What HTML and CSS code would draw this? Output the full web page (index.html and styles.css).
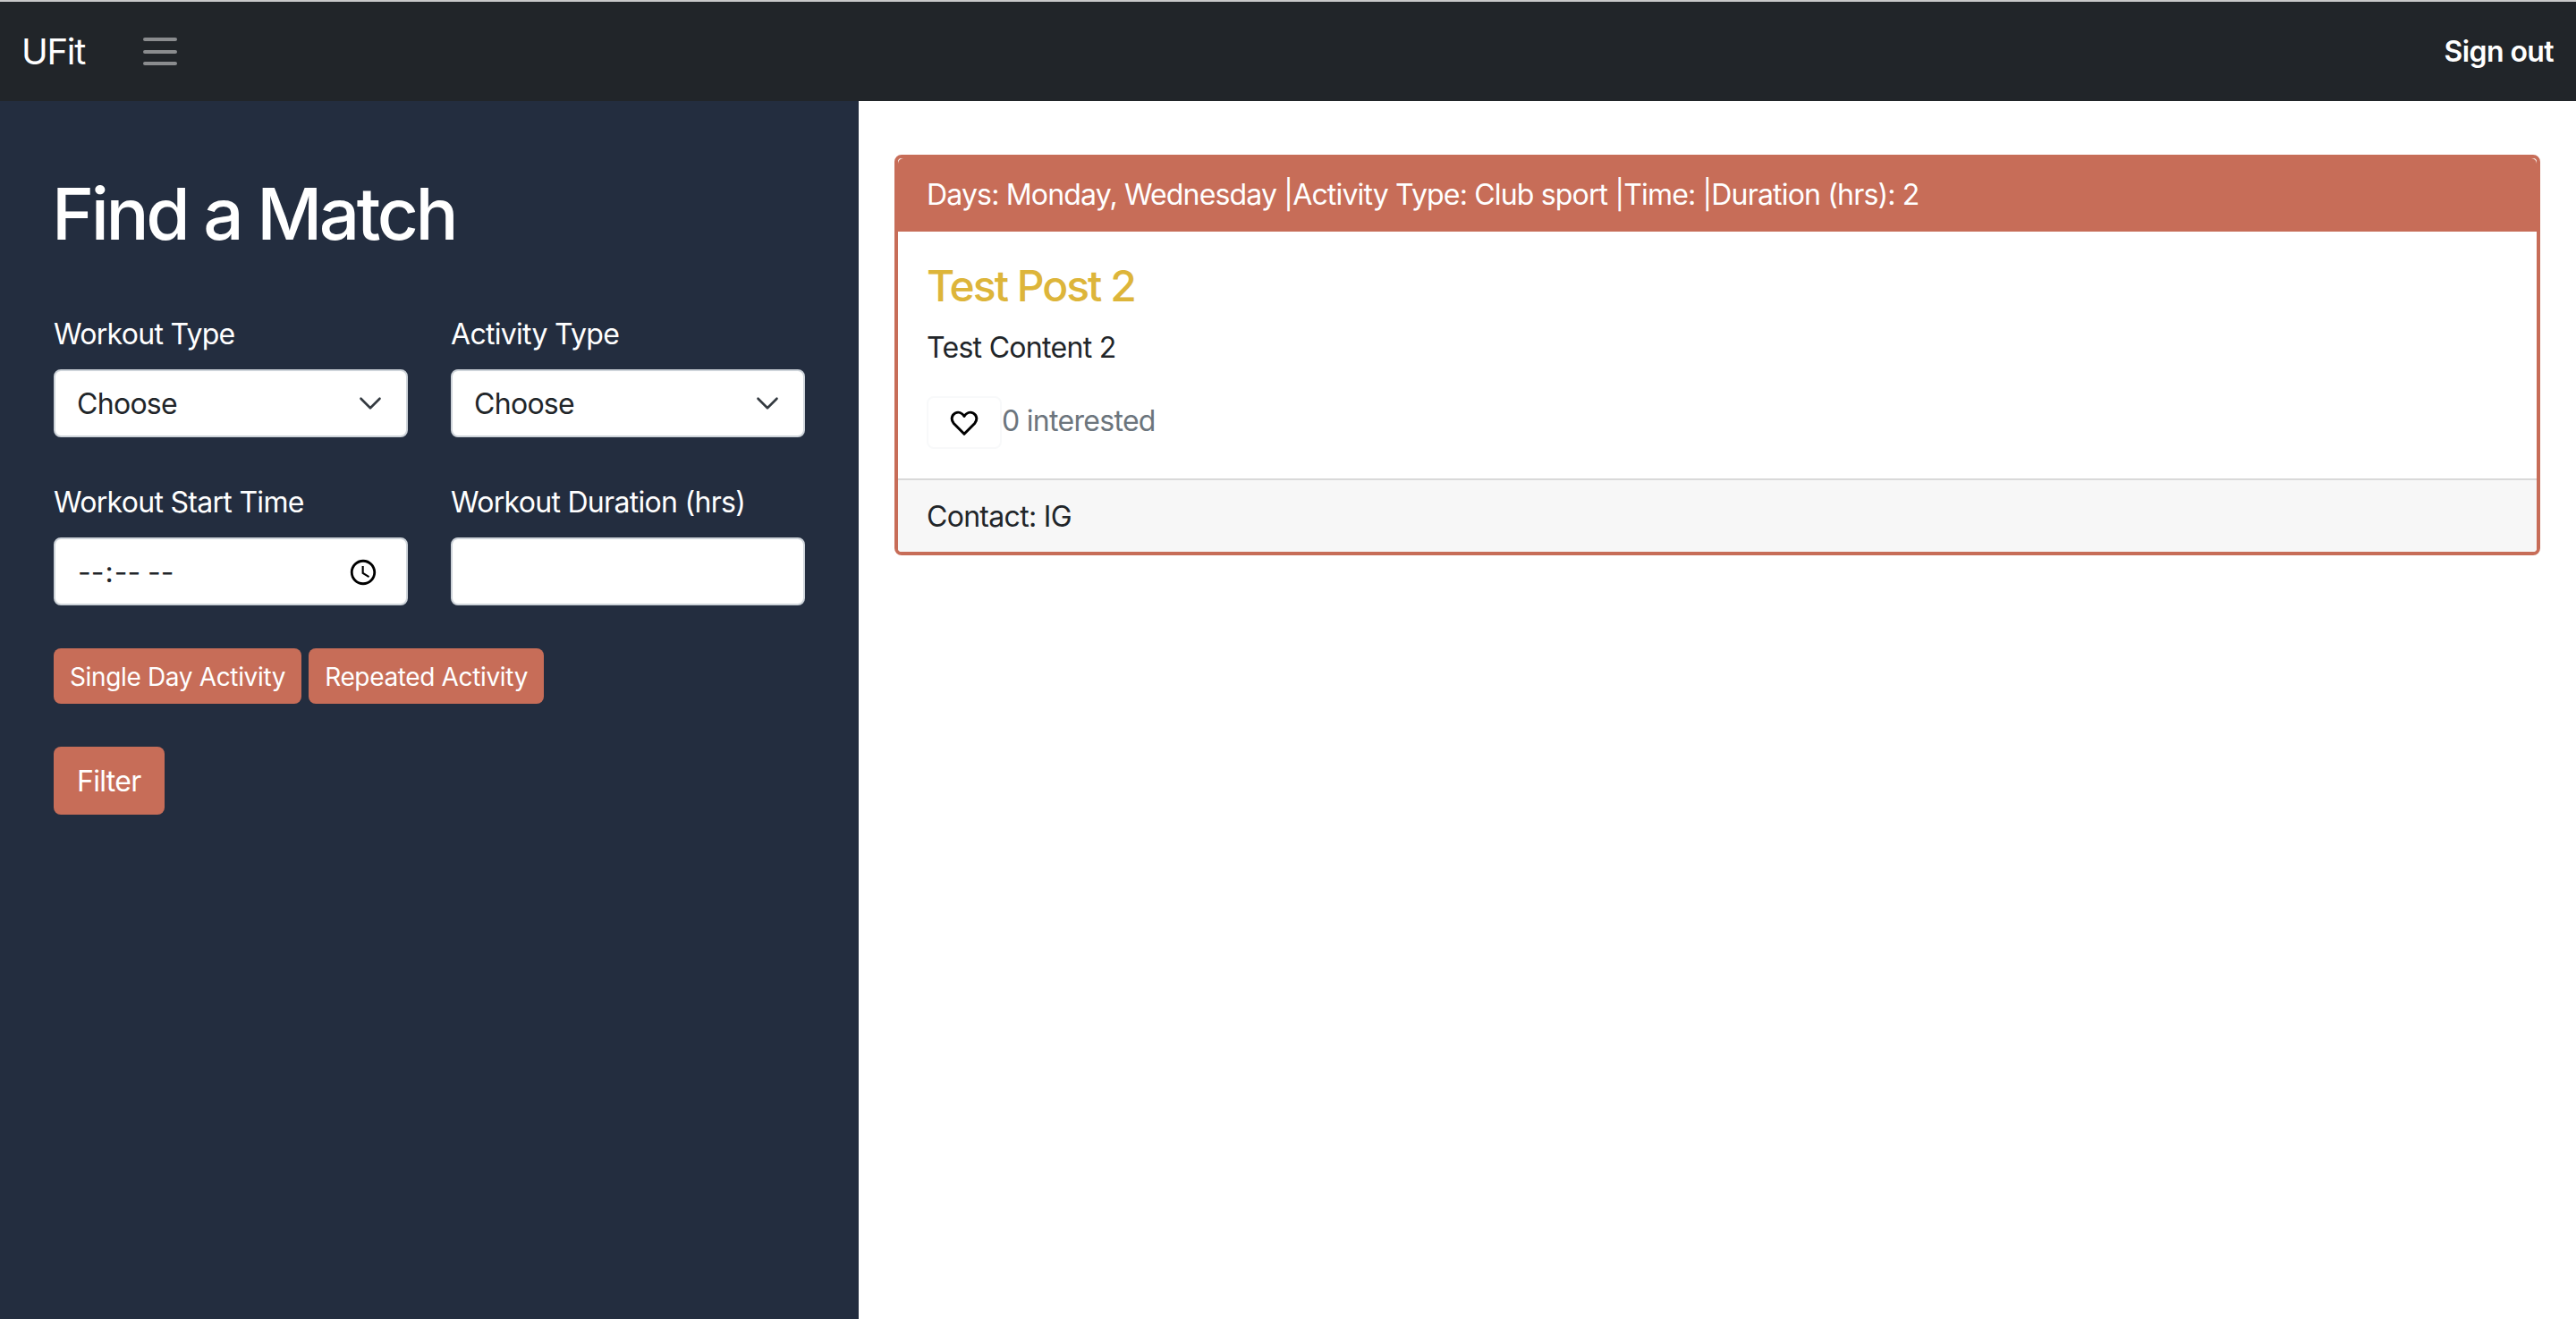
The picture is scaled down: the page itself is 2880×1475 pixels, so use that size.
FILE: index.html
```html
<!DOCTYPE html>
<html lang="en">
<head>
    <meta charset="UTF-8">
    <meta name="viewport" content="width=device-width, initial-scale=1.0">
    <title>UFit - Find a Match</title>
    <link rel="stylesheet" href="styles.css">
</head>
<body>

<header class="navbar">
    <a class="brand" href="#">UFit</a>
    <button class="toggler" type="button" aria-label="Toggle sidebar">
        <span></span><span></span><span></span>
    </button>
    <a class="signout" href="#">Sign out</a>
</header>

<div class="layout">
    <aside class="sidebar">
        <h1>Find a Match</h1>
        <form class="filters">
            <div class="field">
                <label for="workoutType">Workout Type</label>
                <div class="select-wrap">
                    <select id="workoutType"><option>Choose</option></select>
                    <svg class="chevron" viewBox="0 0 16 16"><path fill="none" stroke="#343a40" stroke-linecap="round" stroke-linejoin="round" stroke-width="1.5" d="m2 5 6 6 6-6"/></svg>
                </div>
            </div>
            <div class="field">
                <label for="activityType">Activity Type</label>
                <div class="select-wrap">
                    <select id="activityType"><option>Choose</option></select>
                    <svg class="chevron" viewBox="0 0 16 16"><path fill="none" stroke="#343a40" stroke-linecap="round" stroke-linejoin="round" stroke-width="1.5" d="m2 5 6 6 6-6"/></svg>
                </div>
            </div>
            <div class="field">
                <label for="startTime">Workout Start Time</label>
                <input class="time-input" type="time" id="startTime">
            </div>
            <div class="field">
                <label for="duration">Workout Duration (hrs)</label>
                <input type="text" id="duration">
            </div>
        </form>
        <div class="day-buttons">
            <button class="btn btn-sm" type="button">Single Day Activity</button>
            <button class="btn btn-sm" type="button">Repeated Activity</button>
        </div>
        <button class="btn" type="button">Filter</button>
    </aside>

    <main class="content">
        <div class="card">
            <div class="card-header">Days: Monday, Wednesday |Activity Type: Club sport |Time: |Duration (hrs): 2</div>
            <div class="card-body">
                <h4 class="card-title">Test Post 2</h4>
                <p class="card-text">Test Content 2</p>
                <div class="likes">
                    <button class="like-btn" type="button" aria-label="Interested">
                        <svg viewBox="0 0 32 28" class="heart"><path fill="none" stroke="currentColor" stroke-width="3" stroke-linejoin="round" d="M16 26.3 4.3 14.5C.9 10.7 1.8 5.2 5.9 3c3.6-1.8 7.6-.5 10.1 3.4C18.500 2.500 22.500 1.200 26.100 3c4.100 2.200 5 7.700 1.600 11.500z"/></svg>
                    </button>
                    <span class="muted">0 interested</span>
                </div>
            </div>
            <div class="card-footer">Contact: IG</div>
        </div>
    </main>
</div>

</body>
</html>
```

FILE: styles.css
```css
* {
    box-sizing: border-box;
}
html, body {
    height: 100%;
}
body {
    font-family: 'Inter', 'Liberation Sans', sans-serif;
    font-size: 32px;
    line-height: 48px;
    letter-spacing: -0.7px;
    color: #212529;
    background: #fff;
    margin: 0;
    display: flex;
    flex-direction: column;
}
.navbar {
    height: 113px;
    flex: none;
    display: flex;
    align-items: center;
    background: #212529;
    border-top: 2px solid #c9c9c9;
    padding: 0 25px 0 24px;
}
.brand {
    color: #fff;
    font-size: 40px;
    letter-spacing: -1.3px;
    text-decoration: none;
}
.toggler {
    width: 38px;
    height: 31px;
    margin-left: 65px;
    padding: 0;
    border: none;
    background: none;
    display: flex;
    flex-direction: column;
    justify-content: space-between;
}
.toggler span {
    display: block;
    height: 4px;
    border-radius: 2px;
    background: #8a8c8e;
}
.signout {
    margin-left: auto;
    color: #fff;
    font-weight: 600;
    letter-spacing: -0.6px;
    text-decoration: none;
}
.layout {
    flex: 1;
    display: grid;
    grid-template-columns: 960px 1fr;
}
.sidebar {
    background: #232d3f;
    padding: 78px 60px 0;
}
h1 {
    margin: 0 0 62px -2px;
    color: #fff;
    font-size: 80px;
    font-weight: 500;
    line-height: 96px;
    letter-spacing: -3.4px;
}
.filters {
    display: grid;
    grid-template-columns: 396px 396px;
    column-gap: 48px;
    row-gap: 48px;
}
.field label {
    display: block;
    color: #fff;
    padding-top: 1px;
    margin-bottom: 15px;
}
.select-wrap {
    position: relative;
}
select, input {
    display: block;
    width: 100%;
    height: 76px;
    padding: 2px 24px 0;
    font: inherit;
    letter-spacing: inherit;
    color: #212529;
    background: #fff;
    border: 2px solid #ced4da;
    border-radius: 8px;
    appearance: none;
    outline: none;
}
.time-input {
    padding: 2px 28px 0 24px;
    letter-spacing: 0.5px;
}
.chevron {
    position: absolute;
    right: 28px;
    top: 24px;
    width: 28px;
    height: 28px;
    pointer-events: none;
}
.day-buttons {
    display: flex;
    gap: 8px;
    margin: 48px 0;
}
.btn {
    height: 76px;
    padding: 2px 26px 0;
    font: inherit;
    letter-spacing: inherit;
    color: #fff;
    background: #c76d58;
    border: none;
    border-radius: 8px;
}
.btn-sm {
    height: 62px;
    padding: 2px 18px 0;
    font-size: 28px;
    line-height: 42px;
    letter-spacing: -0.35px;
}
.content {
    padding: 60px 40px 0;
}
.card {
    border: 4px solid #c76d58;
    border-radius: 8px;
}
.card-header {
    background: #c76d58;
    color: #fff;
    letter-spacing: -0.83px;
    padding: 17px 32px;
    border-radius: 6px 6px 0 0;
}
.card-body {
    padding: 32px 32px 33px;
}
.card-title {
    margin: 0 0 16px;
    color: #ddb53a;
    font-size: 48px;
    font-weight: 500;
    line-height: 58px;
    letter-spacing: -2px;
}
.card-text {
    margin: 0 0 30px;
}
.likes {
    display: flex;
    align-items: flex-start;
}
.like-btn {
    width: 84px;
    height: 59px;
    padding: 0;
    display: flex;
    align-items: center;
    justify-content: center;
    color: #000;
    background: #fff;
    border: 2px solid #f8f9fa;
    border-radius: 8px;
}
.heart {
    width: 32px;
    height: 28px;
    margin-top: 1px;
}
.muted {
    color: #6c757d;
    margin-top: 4px;
}
.card-footer {
    background: #f7f7f7;
    border-top: 2px solid #d9d9d9;
    padding: 17px 32px 15px;
    border-radius: 0 0 4px 4px;
}
```
